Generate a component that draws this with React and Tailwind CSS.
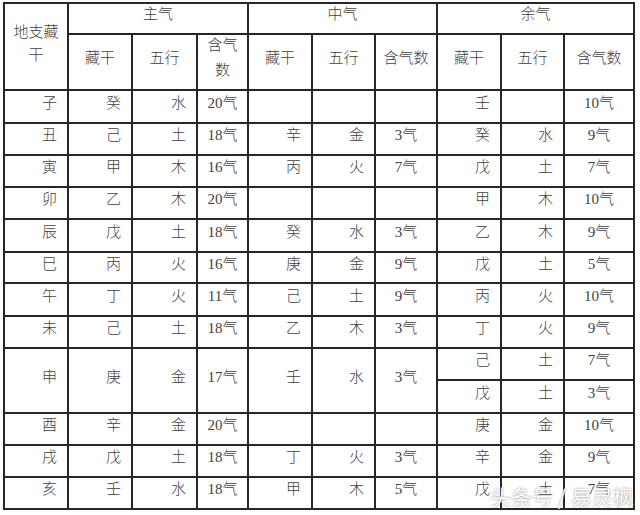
import React from "react";

const FONT = {
  fontFamily: '"Liberation Serif", "Noto Sans CJK SC", serif',
};

const rows = [
  ["子", "癸", "水", "20气", "", "", "", "壬", "", "10气"],
  ["丑", "己", "土", "18气", "辛", "金", "3气", "癸", "水", "9气"],
  ["寅", "甲", "木", "16气", "丙", "火", "7气", "戊", "土", "7气"],
  ["卯", "乙", "木", "20气", "", "", "", "甲", "木", "10气"],
  ["辰", "戊", "土", "18气", "癸", "水", "3气", "乙", "木", "9气"],
  ["巳", "丙", "火", "16气", "庚", "金", "9气", "戊", "土", "5气"],
  ["午", "丁", "火", "11气", "己", "土", "9气", "丙", "火", "10气"],
  ["未", "己", "土", "18气", "乙", "木", "3气", "丁", "火", "9气"],
];

const tail = [
  ["酉", "辛", "金", "20气", "", "", "", "庚", "金", "10气"],
  ["戌", "戊", "土", "18气", "丁", "火", "3气", "辛", "金", "9气"],
  ["亥", "壬", "水", "18气", "甲", "木", "5气", "戊", "土", "7气"],
];

function Cell({ text, col, extra = "" }) {
  const qi = col === 3 || col === 6 || col === 9;
  return (
    <div
      className={
        "bg-white flex items-center pb-[7px] text-[15px] font-light leading-none text-[#3f3f3f] " +
        (qi ? "justify-center " : "justify-end pr-[10px] ") +
        extra
      }
    >
      {text}
    </div>
  );
}

function DataRow({ r }) {
  return r.map((t, i) => <Cell key={i} text={t} col={i} />);
}

export default function App() {
  return (
    <div className="relative w-[640px] h-[515px] bg-white overflow-hidden" style={FONT}>
      <div className="relative ml-[3px] pt-[2px]">
        <div className="grid w-[632px] bg-[#262626] p-[2px] gap-[2px] grid-cols-[62px_62px_63px_49px_62px_61px_60px_62px_61px_68px] grid-rows-[29px_54px_31px_30px_30px_30px_31px_29px_31px_30px_30px_31px_30px_30px_30px]">
          <div className="row-span-2 bg-white flex items-center justify-center pb-[6px] text-center text-[15px] font-light leading-[23px] text-[#3f3f3f] px-[4px]">
            地支藏干
          </div>
          <div className="col-span-3 bg-white flex items-center justify-center pb-[8px] text-[15px] font-light leading-none text-[#3f3f3f]">
            主气
          </div>
          <div className="col-span-3 bg-white flex items-center justify-center pb-[8px] text-[15px] font-light leading-none text-[#3f3f3f]">
            中气
          </div>
          <div className="col-span-3 bg-white flex items-center justify-center pb-[8px] text-[15px] font-light leading-none text-[#3f3f3f]">
            余气
          </div>
          {["藏干", "五行", "含气数", "藏干", "五行", "含气数", "藏干", "五行", "含气数"].map(
            (t, i) => (
              <div
                key={i}
                className="bg-white flex items-center justify-center pb-[8px] text-center text-[15px] font-light leading-[25px] text-[#3f3f3f] px-[1px]"
              >
                {i === 2 ? (
                  <span>
                    含气
                    <br />
                    数
                  </span>
                ) : (
                  t
                )}
              </div>
            )
          )}
          {rows.map((r, i) => (
            <DataRow key={i} r={r} />
          ))}
          {["申", "庚", "金", "17气", "壬", "水", "3气"].map((t, i) => (
            <Cell key={"s" + i} text={t} col={i} extra="row-span-2" />
          ))}
          <Cell text="己" col={7} />
          <Cell text="土" col={8} />
          <Cell text="7气" col={9} />
          <Cell text="戊" col={7} />
          <Cell text="土" col={8} />
          <Cell text="3气" col={9} />
          {tail.map((r, i) => (
            <DataRow key={"t" + i} r={r} />
          ))}
        </div>
      </div>
      <div
        className="absolute left-[490px] top-[486px] text-[21px] leading-none text-white whitespace-nowrap [text-shadow:0_0_2px_rgba(110,110,110,0.9)]"
        style={{ fontFamily: '"Noto Sans CJK SC", sans-serif' }}
      >
        头条号 / 易灵枫
      </div>
    </div>
  );
}
